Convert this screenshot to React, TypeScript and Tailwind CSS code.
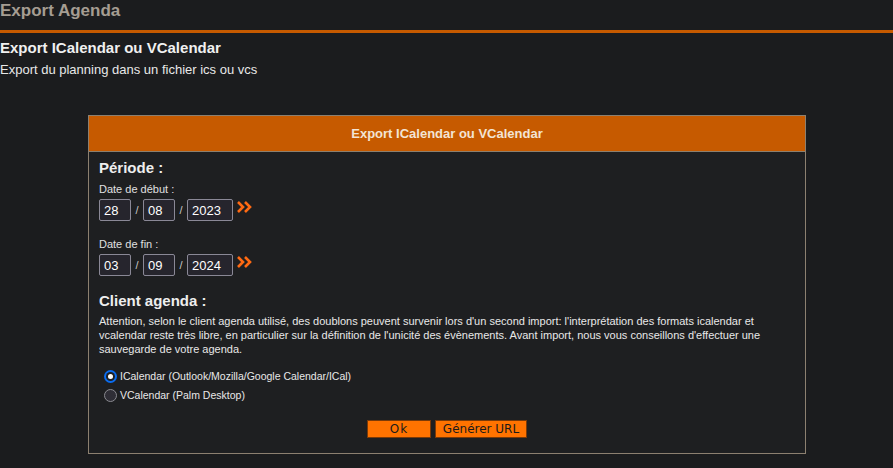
import React from "react";

function DateField({ d, m, y }: { d: string; m: string; y: string }) {
  const box =
    "h-[22px] border border-[#8a8896] rounded-[2px] bg-[#26252d] text-white text-[13px] leading-none pl-[4px] flex items-center";
  return (
    <div className="flex items-center mt-[3px]">
      <div className={`${box} w-[32px]`}>{d}</div>
      <span className="w-[12px] text-center text-[11px] text-[#c8c8c8]">/</span>
      <div className={`${box} w-[32px]`}>{m}</div>
      <span className="w-[12px] text-center text-[11px] text-[#c8c8c8]">/</span>
      <div className={`${box} w-[46px]`}>{y}</div>
      <svg width="16" height="12" viewBox="0 0 16 12" className="ml-[4px] -mt-[6px]">
        <path d="M1 1 L6 6 L1 11" fill="none" stroke="#ff6a13" strokeWidth="2.6" />
        <path d="M8 1 L13 6 L8 11" fill="none" stroke="#ff6a13" strokeWidth="2.6" />
      </svg>
    </div>
  );
}

function Radio({ checked, label }: { checked?: boolean; label: string }) {
  return (
    <div className="flex items-center h-[19px]">
      <span
        className={
          checked
            ? "w-[13px] h-[13px] rounded-full bg-[#0a6cf0] flex items-center justify-center ml-[5px] mr-[3px]"
            : "w-[13px] h-[13px] rounded-full border border-[#8a8a90] bg-[#2f2e36] ml-[5px] mr-[3px]"
        }
      >
        {checked && (
          <span className="w-[9px] h-[9px] rounded-full bg-[#1e1f21] flex items-center justify-center">
            <span className="w-[5px] h-[5px] rounded-full bg-white" />
          </span>
        )}
      </span>
      <span className="text-[10.5px] text-[#e8e8e8]">{label}</span>
    </div>
  );
}

export default function App() {
  return (
    <div className="w-[893px] h-[468px] bg-[#1b1c1e] font-['Liberation_Sans',Arial,sans-serif] overflow-hidden">
      <div className="h-[30px]">
        <h1 className="text-[17px] font-bold text-[#a59d92] leading-[22px]">Export Agenda</h1>
      </div>
      <div className="h-[3px] bg-[#c65a00]" />
      <div className="pt-[5px]">
        <h2 className="text-[15px] font-bold text-[#f0f0f0] leading-[20px]">Export ICalendar ou VCalendar</h2>
        <p className="text-[13px] text-[#e8e8e8] leading-[16px] mt-[4px]">
          Export du planning dans un fichier ics ou vcs
        </p>
      </div>

      <div className="ml-[88px] mt-[37px] w-[718px] border border-[#8c8070] bg-[#1e1f21]">
        <div className="h-[36px] bg-[#c65a00] border-b border-[#8c8070] flex items-center justify-center">
          <span className="text-[13px] font-bold text-[#f3e4d4]">Export ICalendar ou VCalendar</span>
        </div>
        <div className="pl-[10px] pt-[7px] pb-[15px]">
          <h3 className="text-[15px] font-bold text-[#eeeeee] leading-[18px]">Période :</h3>
          <div className="text-[11px] text-[#e0e0e0] mt-[5px] leading-[14px]">Date de début :</div>
          <DateField d="28" m="08" y="2023" />
          <div className="text-[11px] text-[#e0e0e0] mt-[16px] leading-[14px]">Date de fin :</div>
          <DateField d="03" m="09" y="2024" />

          <h3 className="text-[15px] font-bold text-[#eeeeee] leading-[18px] mt-[16px]">Client agenda :</h3>
          <p className="text-[11px] text-[#e8e8e8] leading-[14px] mt-[4px] w-[675px]">
            Attention, selon le client agenda utilisé, des doublons peuvent survenir lors d'un second import:
            l'interprétation des formats icalendar et vcalendar reste très libre, en particulier sur la
            définition de l'unicité des évènements. Avant import, nous vous conseillons d'effectuer une
            sauvegarde de votre agenda.
          </p>
          <div className="mt-[11px]">
            <Radio checked label="ICalendar (Outlook/Mozilla/Google Calendar/ICal)" />
            <Radio label="VCalendar (Palm Desktop)" />
          </div>
          <div className="flex justify-center gap-[4px] mt-[15px] pr-[10px]">
            <button className="w-[64px] h-[18px] bg-[#ff7300] border border-[#7a3a08] text-[12px] text-[#1a1a1a] font-['DejaVu_Sans',sans-serif] leading-none tracking-[1px]">
              Ok
            </button>
            <button className="w-[92px] h-[18px] bg-[#ff7300] border border-[#7a3a08] text-[12px] text-[#1a1a1a] font-['DejaVu_Sans',sans-serif] leading-none">
              Générer URL
            </button>
          </div>
        </div>
      </div>
    </div>
  );
}
